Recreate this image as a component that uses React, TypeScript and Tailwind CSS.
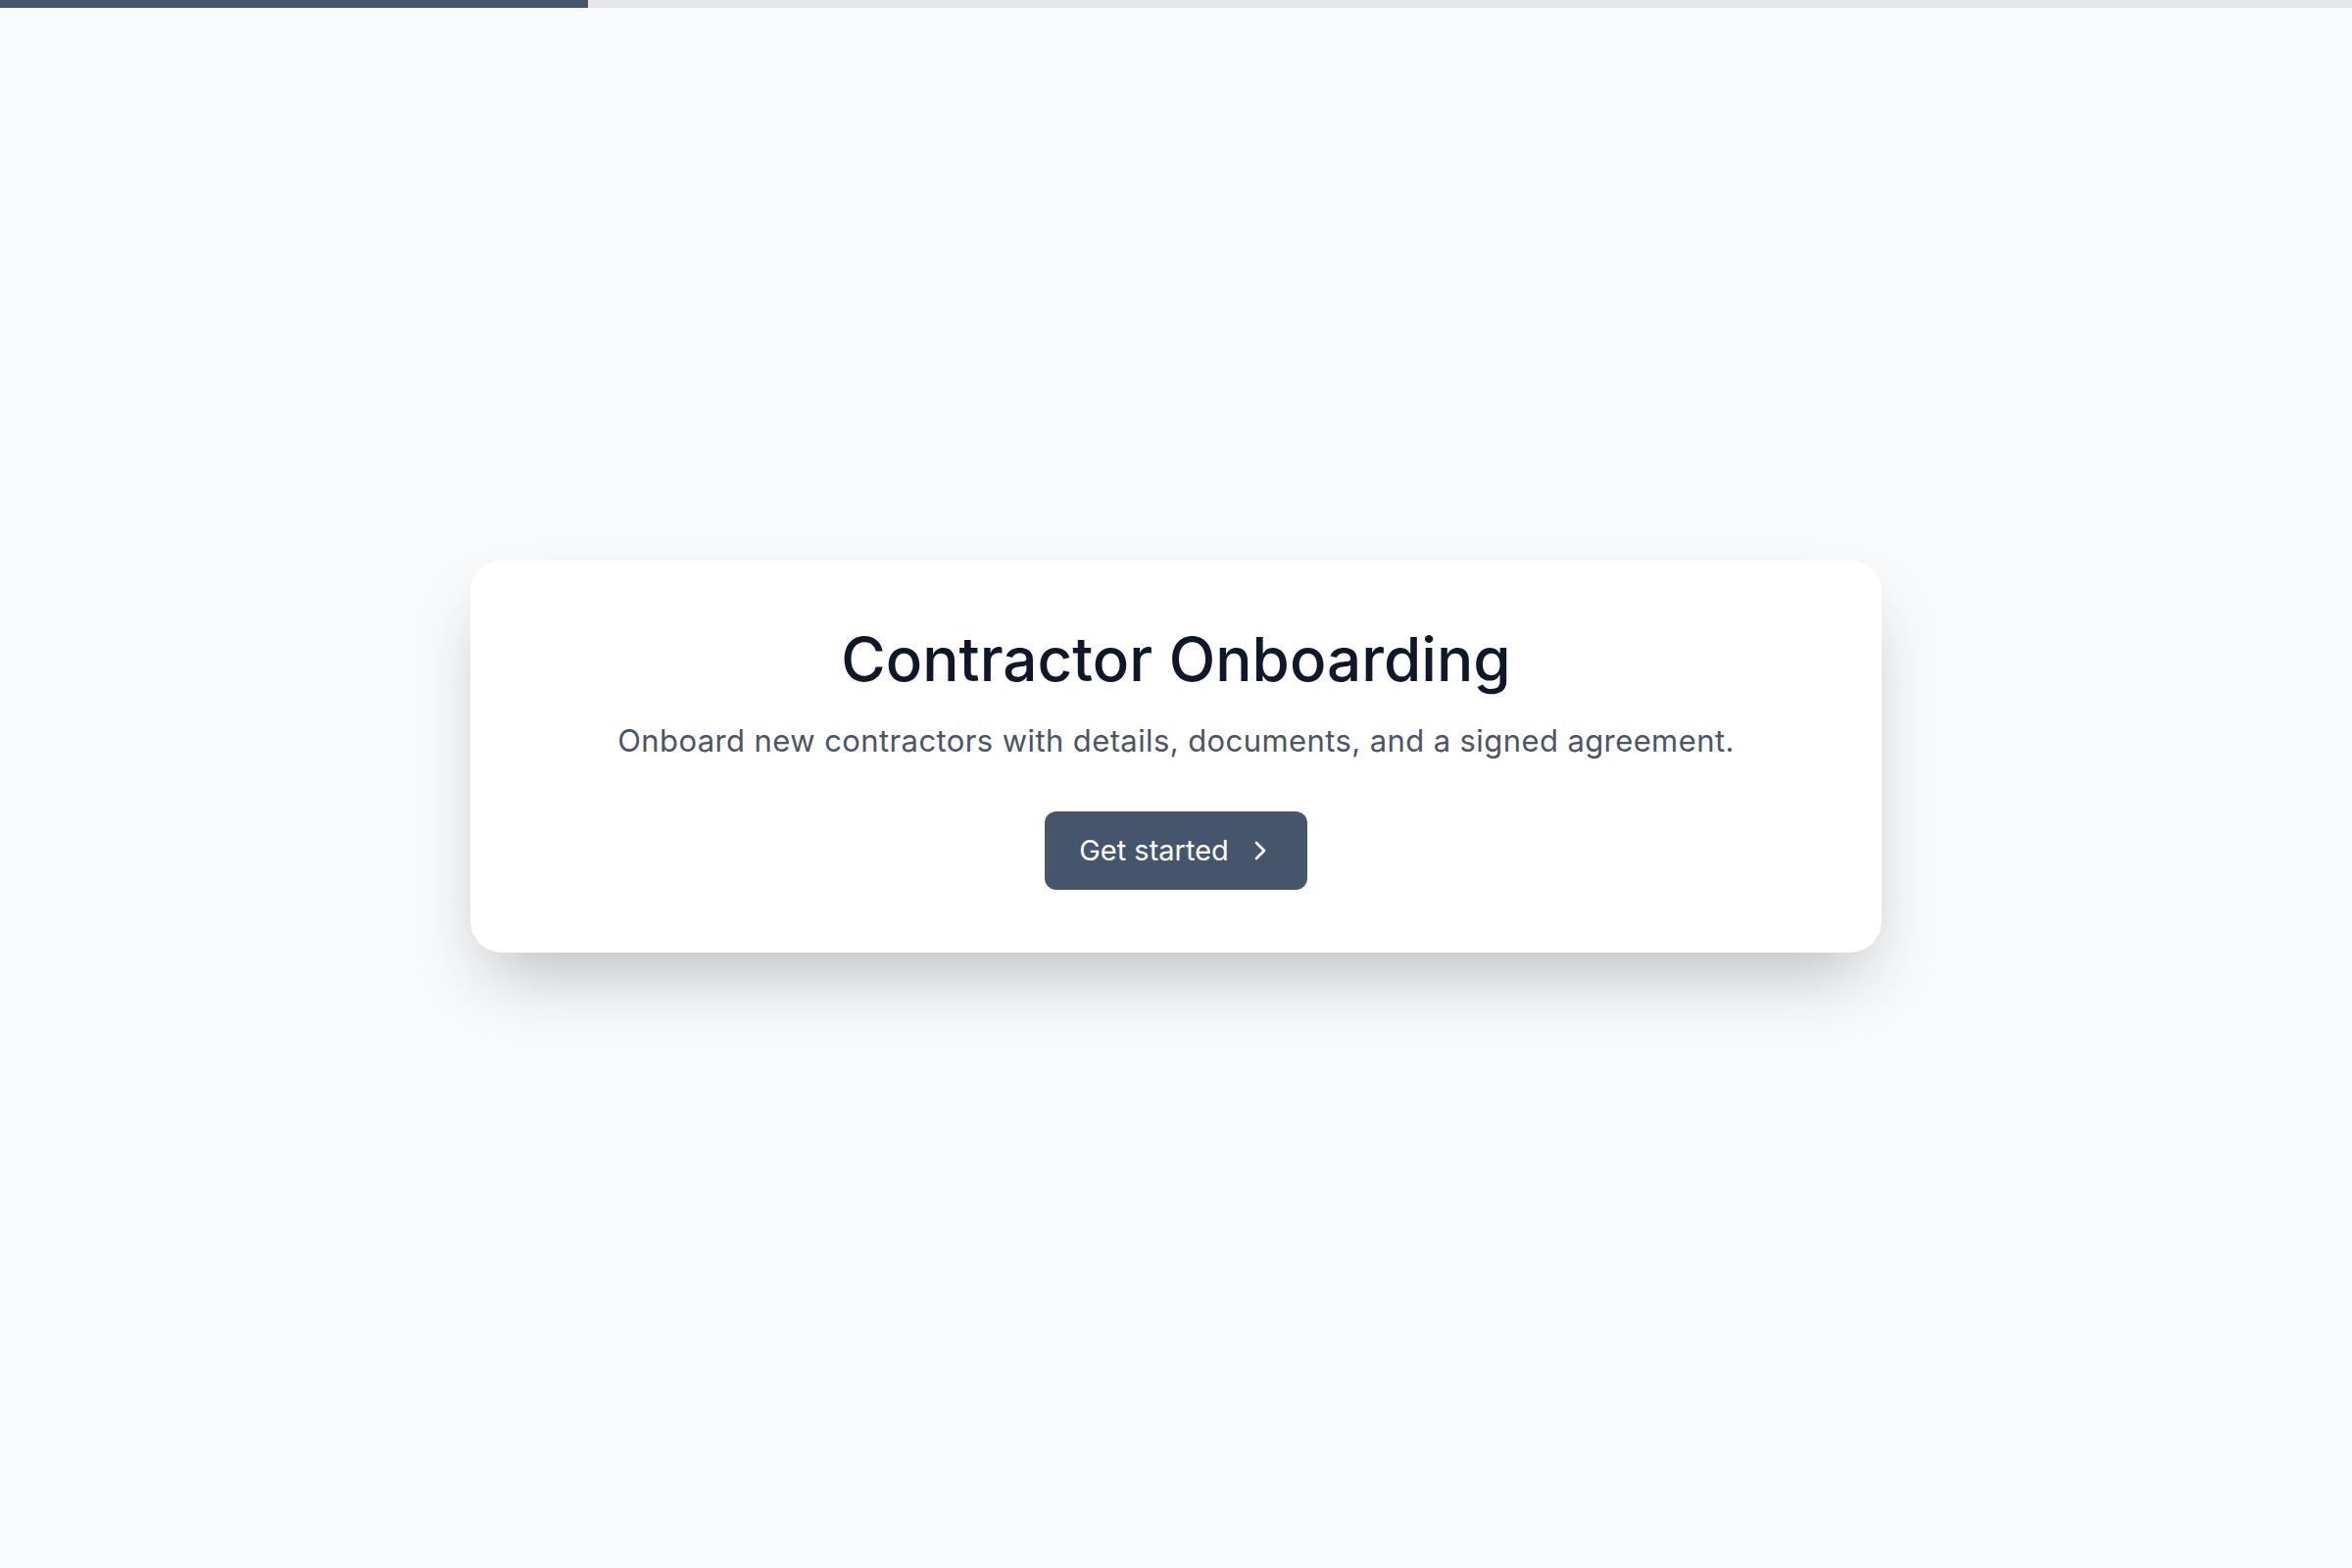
import React from 'react';
import { ChevronRight } from 'lucide-react';

const App = () => {
  const progress = 25;

  return (
    <div className="min-h-screen flex flex-col bg-gray-50" style={{ fontFamily: 'Inter, "Noto Sans", sans-serif' }}>
      {/* Progress */}
      <div className="h-2 w-full bg-gray-200">
        <div className="h-full bg-slate-600" style={{ width: `${progress}%` }} />
      </div>

      <main className="flex-1 flex items-center justify-center px-8 pb-16">
        <div className="w-full max-w-[1440px] bg-white rounded-[32px] shadow-[0_37px_75px_-18px_rgba(0,0,0,0.25)] p-16 text-center">
          <h1 className="text-[62px] leading-[1.2] font-medium text-slate-900">
            Contractor Onboarding
          </h1>
          <p className="mt-[23px] text-[31px] leading-[1.4] tracking-[0.013em] text-gray-600">
            Onboard new contractors with details, documents, and a signed agreement.
          </p>
          <div className="mt-[51px] flex justify-center">
            <button className="inline-flex items-center gap-4 h-20 pl-[35px] pr-8 rounded-xl bg-slate-600 text-white text-[29px] hover:bg-slate-700 transition-colors">
              Get started
              <ChevronRight className="w-8 h-8" strokeWidth={2} />
            </button>
          </div>
        </div>
      </main>
    </div>
  );
};

export default App;
